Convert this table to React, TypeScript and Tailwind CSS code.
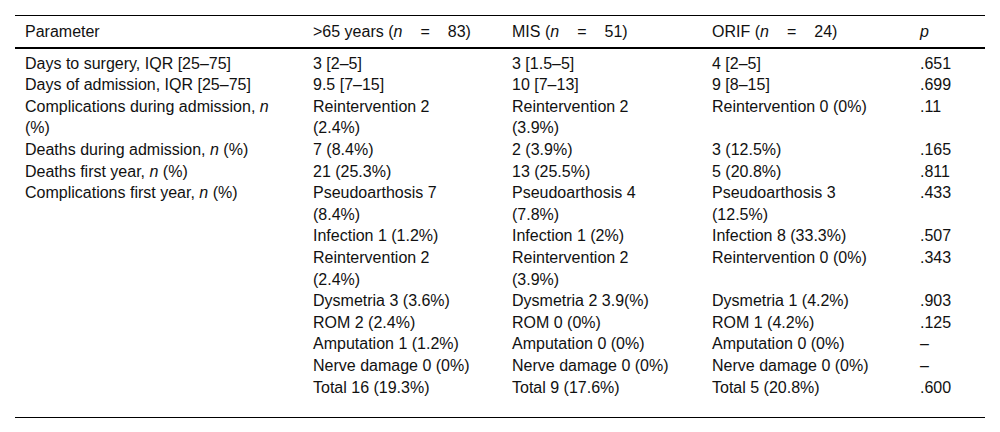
import React from "react";

type Row = [React.ReactNode, string, string, string, string];

const n = <i>n</i>;

const rows: Row[] = [
  ["Days to surgery, IQR [25–75]", "3 [2–5]", "3 [1.5–5]", "4 [2–5]", ".651"],
  ["Days of admission, IQR [25–75]", "9.5 [7–15]", "10 [7–13]", "9 [8–15]", ".699"],
  [<>Complications during admission, {n} (%)</>, "Reintervention 2 (2.4%)", "Reintervention 2 (3.9%)", "Reintervention 0 (0%)", ".11"],
  [<>Deaths during admission, {n} (%)</>, "7 (8.4%)", "2 (3.9%)", "3 (12.5%)", ".165"],
  [<>Deaths first year, {n} (%)</>, "21 (25.3%)", "13 (25.5%)", "5 (20.8%)", ".811"],
  [<>Complications first year, {n} (%)</>, "Pseudoarthosis 7 (8.4%)", "Pseudoarthosis 4 (7.8%)", "Pseudoarthosis 3 (12.5%)", ".433"],
  ["", "Infection 1 (1.2%)", "Infection 1 (2%)", "Infection 8 (33.3%)", ".507"],
  ["", "Reintervention 2 (2.4%)", "Reintervention 2 (3.9%)", "Reintervention 0 (0%)", ".343"],
  ["", "Dysmetria 3 (3.6%)", "Dysmetria 2 3.9(%)", "Dysmetria 1 (4.2%)", ".903"],
  ["", "ROM 2 (2.4%)", "ROM 0 (0%)", "ROM 1 (4.2%)", ".125"],
  ["", "Amputation 1 (1.2%)", "Amputation 0 (0%)", "Amputation 0 (0%)", "–"],
  ["", "Nerve damage 0 (0%)", "Nerve damage 0 (0%)", "Nerve damage 0 (0%)", "–"],
  ["", "Total 16 (19.3%)", "Total 9 (17.6%)", "Total 5 (20.8%)", ".600"],
];

function GroupHead({ label, count }: { label: string; count: string }) {
  return (
    <>
      {label} ({n}
      <span className="px-[18px]">=</span>
      {count})
    </>
  );
}

export default function App() {
  return (
    <div className="w-[1000px] h-[432px] bg-white pt-[15px] px-[15px] font-['Liberation_Sans',Arial,sans-serif] text-[16px] leading-[21.6px] text-[#111]">
      <table className="w-[970px] table-fixed border-collapse border-t border-b border-black">
        <colgroup>
          <col className="w-[288px]" />
          <col className="w-[199px]" />
          <col className="w-[200px]" />
          <col className="w-[208px]" />
          <col className="w-[75px]" />
        </colgroup>
        <thead>
          <tr className="border-b-2 border-black">
            <th className="text-left font-normal pl-[10px] pr-[28px] pt-[5px] pb-[4px]">Parameter</th>
            <th className="text-left font-normal pl-[10px] pr-[20px] pt-[5px] pb-[4px]">
              <GroupHead label=">65 years" count="83" />
            </th>
            <th className="text-left font-normal pl-[10px] pr-[20px] pt-[5px] pb-[4px]">
              <GroupHead label="MIS" count="51" />
            </th>
            <th className="text-left font-normal pl-[10px] pr-[20px] pt-[5px] pb-[4px]">
              <GroupHead label="ORIF" count="24" />
            </th>
            <th className="text-left font-normal pl-[10px] pr-[10px] pt-[5px] pb-[4px]">
              <i>p</i>
            </th>
          </tr>
        </thead>
        <tbody>
          {rows.map((r, i) => {
            const pad = i === 0 ? "pt-[4px]" : i === rows.length - 1 ? "pb-[19px]" : "";
            return (
              <tr key={i}>
                {r.map((cell, j) => (
                  <td
                    key={j}
                    className={`align-top pl-[10px] ${j === 4 ? "pr-[10px]" : "pr-[28px]"} ${pad}`}
                  >
                    {cell}
                  </td>
                ))}
              </tr>
            );
          })}
        </tbody>
      </table>
    </div>
  );
}
